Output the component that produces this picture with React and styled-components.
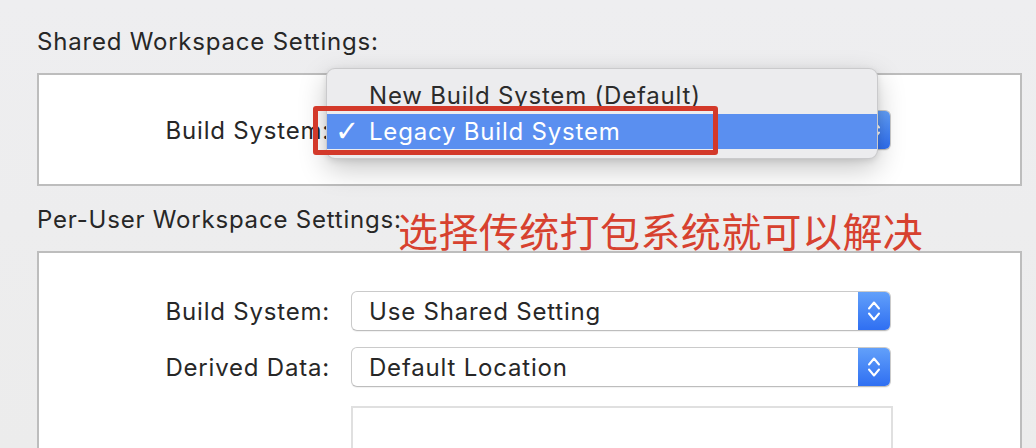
import React from "react";
import styled, { createGlobalStyle } from "styled-components";

const GlobalStyle = createGlobalStyle`
  body {
    margin: 0;
    background: #ededee;
    font-family: Inter, "Liberation Sans", sans-serif;
    color: #272727;
  }
`;

const Page = styled.div`
  position: relative;
  width: 1036px;
  height: 448px;
  overflow: hidden;
  box-sizing: border-box;
  padding: 27px 14px 0 37px;
  background: linear-gradient(#eeeef0, #ececec);
`;

const SectionTitle = styled.div`
  font-size: 24px;
  line-height: 30px;
  height: 30px;
  letter-spacing: 0.8px;
  margin-top: ${(p) => p.$top || 0}px;
  margin-bottom: 16px;
  white-space: nowrap;
`;

const Box = styled.div`
  background: #fff;
  border: 2px solid #bdbdbd;
  height: ${(p) => p.$height}px;
  box-sizing: border-box;
  padding-top: ${(p) => p.$padTop}px;
`;

const FormGrid = styled.div`
  display: grid;
  grid-template-columns: 291px 540px;
  column-gap: 21px;
  row-gap: 16px;
  align-items: center;
`;

const Label = styled.div`
  font-size: 24px;
  letter-spacing: 0.8px;
  text-align: right;
  white-space: nowrap;
`;

const PopupWrap = styled.div`
  position: relative;
  height: 40px;
`;

const Popup = styled.div`
  display: flex;
  align-items: center;
  height: 40px;
  box-sizing: border-box;
  border: 1px solid #cacaca;
  border-bottom-color: #bdbdbd;
  border-radius: 6px;
  background: #fff;
  box-shadow: 0 1px 1px rgba(0, 0, 0, 0.06);
  overflow: hidden;
`;

const PopupText = styled.div`
  flex: 1;
  padding-left: 17px;
  font-size: 24px;
  letter-spacing: 0.8px;
  white-space: nowrap;
`;

const Stepper = styled.div`
  width: 32px;
  height: 100%;
  display: flex;
  align-items: center;
  justify-content: center;
  background: linear-gradient(#62a0fa, #2f6ff2);
`;

const TextField = styled.div`
  grid-column: 2;
  width: 542px;
  height: 56px;
  margin-top: 3px;
  border: 2px solid #e0e0e0;
  box-sizing: border-box;
  background: #fff;
`;

const Menu = styled.div`
  position: absolute;
  left: -25px;
  top: -42px;
  width: 552px;
  box-sizing: border-box;
  padding: 8px 0 9px;
  background: #ececee;
  border: 1px solid rgba(0, 0, 0, 0.14);
  border-radius: 9px;
  box-shadow: 0 10px 28px rgba(0, 0, 0, 0.22), 0 2px 6px rgba(0, 0, 0, 0.1);
  z-index: 2;
`;

const MenuItem = styled.div`
  display: flex;
  align-items: center;
  height: ${(p) => (p.$selected ? 35 : 37)}px;
  font-size: 24px;
  letter-spacing: 0.8px;
  color: ${(p) => (p.$selected ? "#fff" : "#2b2b2b")};
  background: ${(p) => (p.$selected ? "#5a8ff0" : "transparent")};
  white-space: nowrap;
`;

const Check = styled.span`
  width: 42px;
  padding-left: 8px;
  box-sizing: border-box;
  font-size: 29px;
  line-height: 1;
  letter-spacing: 0;
  font-family: "DejaVu Sans", sans-serif;
`;

const Highlight = styled.div`
  position: absolute;
  left: -38px;
  top: -4px;
  width: 405px;
  height: 49px;
  box-sizing: border-box;
  border: 5px solid #d3392a;
  border-radius: 3px;
  z-index: 3;
`;

const Note = styled.div`
  position: absolute;
  left: 398px;
  top: 210px;
  font-family: "Noto Sans CJK SC", sans-serif;
  font-size: 40px;
  line-height: 40px;
  letter-spacing: 0.4px;
  color: #d7412f;
  white-space: nowrap;
  z-index: 3;
`;

function Chevrons() {
  return (
    <svg width="16" height="24" viewBox="0 0 16 24" fill="none">
      <path d="M3 9.5 L8 3.5 L13 9.5" stroke="#fff" strokeWidth="2" strokeLinecap="round" strokeLinejoin="round" />
      <path d="M3 14.5 L8 20.5 L13 14.5" stroke="#fff" strokeWidth="2" strokeLinecap="round" strokeLinejoin="round" />
    </svg>
  );
}

function PopupButton({ value, children }) {
  return (
    <PopupWrap>
      <Popup>
        <PopupText>{value}</PopupText>
        <Stepper>
          <Chevrons />
        </Stepper>
      </Popup>
      {children}
    </PopupWrap>
  );
}

export default function App() {
  return (
    <>
      <GlobalStyle />
      <Page>
        <SectionTitle>Shared Workspace Settings:</SectionTitle>
        <Box $height={113} $padTop={35}>
          <FormGrid>
            <Label>Build System:</Label>
            <PopupButton value="Legacy Build System">
              <Menu>
                <MenuItem>
                  <Check />
                  New Build System (Default)
                </MenuItem>
                <MenuItem $selected>
                  <Check>✓</Check>
                  Legacy Build System
                </MenuItem>
              </Menu>
              <Highlight />
            </PopupButton>
          </FormGrid>
        </Box>

        <SectionTitle $top={19}>Per-User Workspace Settings:</SectionTitle>
        <Box $height={260} $padTop={38}>
          <FormGrid>
            <Label>Build System:</Label>
            <PopupButton value="Use Shared Setting" />
            <Label>Derived Data:</Label>
            <PopupButton value="Default Location" />
            <TextField />
          </FormGrid>
        </Box>

        <Note>选择传统打包系统就可以解决</Note>
      </Page>
    </>
  );
}
